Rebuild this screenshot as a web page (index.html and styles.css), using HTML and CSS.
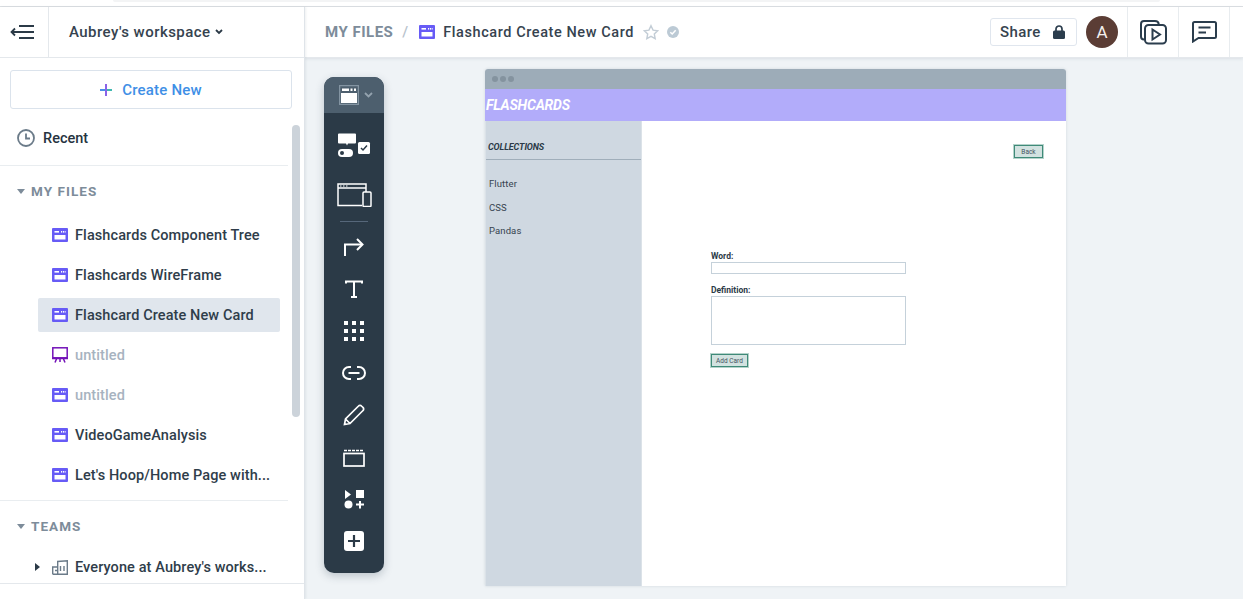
FILE: index.html
```html
<!DOCTYPE html>
<html lang="en">
<head>
  <meta charset="UTF-8" />
  <meta name="viewport" content="width=device-width, initial-scale=1" />
  <title>Flashcard Create New Card</title>
  <link rel="stylesheet" href="styles.css">
</head>
<body>
  <svg class="defs" width="0" height="0">
    <symbol id="board" viewBox="0 0 16 14">
      <rect width="16" height="14" rx="1" fill="#675bf6"/>
      <rect x="2.500" y="7" width="11" height="4.500" fill="#fff"/>
      <rect x="2.500" y="3" width="4.500" height="1.600" fill="#fff"/>
      <rect x="9" y="3" width="1.200" height="1.600" fill="#fff"/>
      <rect x="11" y="3" width="1.200" height="1.600" fill="#fff"/>
      <rect x="12.800" y="3" width=".8" height="1.600" fill="#fff"/>
    </symbol>
  </svg>

  <div class="top-strip"><div class="top-strip-bar"></div></div>

  <div class="app">
    <!-- left sidebar -->
    <aside class="sidebar">
      <div class="side-head">
        <div class="menu-cell">
          <svg width="24" height="16" viewBox="0 0 24 16" fill="none" stroke="#2b3a47" stroke-width="2">
            <path d="M9 2h15M1 8h23M9 14h15"/>
            <path d="M5 4.500 1.500 8 5 11.500" stroke-width="1.800"/>
          </svg>
        </div>
        <div class="workspace">Aubrey's workspace
          <svg width="8" height="6" viewBox="0 0 8 6" fill="none" stroke="#2b3a47" stroke-width="1.800"><path d="M1 1l3 3 3-3"/></svg>
        </div>
      </div>

      <div class="create-wrap">
        <button class="create-btn">
          <svg width="12" height="12" viewBox="0 0 12 12">
            <rect y="5" width="6" height="2" fill="#4b8fe8"/>
            <rect x="6" y="5" width="6" height="2" fill="#3fb8b0"/>
            <rect x="5" width="2" height="12" fill="#8a63e8"/>
          </svg>
          Create New
        </button>
      </div>

      <div class="recent">
        <svg width="18" height="18" viewBox="0 0 18 18" fill="none" stroke="#6b7b89" stroke-width="1.800">
          <circle cx="9" cy="9" r="8"/>
          <path d="M9 4.500V9.500h4"/>
        </svg>
        Recent
      </div>

      <div class="sec-title"><span class="caret-down"></span>MY FILES</div>
      <ul class="files">
        <li class="file"><svg class="file-icon"><use href="#board"/></svg>Flashcards Component Tree</li>
        <li class="file"><svg class="file-icon"><use href="#board"/></svg>Flashcards WireFrame</li>
        <li class="file selected"><svg class="file-icon"><use href="#board"/></svg>Flashcard Create New Card</li>
        <li class="file muted">
          <svg class="file-icon" viewBox="0 0 16 16" fill="none" stroke="#7312b8" stroke-width="1.500">
            <rect x=".8" y=".8" width="14.400" height="10"/>
            <path d="M0 11.500h16M4.500 12l-1.500 3.500M8 12v3M11.500 12l1.500 3.500"/>
          </svg>
          untitled
        </li>
        <li class="file muted"><svg class="file-icon"><use href="#board"/></svg>untitled</li>
        <li class="file"><svg class="file-icon"><use href="#board"/></svg>VideoGameAnalysis</li>
        <li class="file"><svg class="file-icon"><use href="#board"/></svg>Let's Hoop/Home Page with...</li>
      </ul>

      <div class="sec-title teams"><span class="caret-down"></span>TEAMS</div>
      <div class="team-row">
        <span class="caret-right"></span>
        <svg class="file-icon" viewBox="0 0 16 15" fill="none" stroke="#6b7b89" stroke-width="1.400">
          <path d="M.7 14.300V7h5M5.700 14.300V1.500L15.300 .8v13.500zM.7 14.300h14.600"/>
          <path d="M3 10.500h2M8.500 6v5M12 6v5"/>
        </svg>
        Everyone at Aubrey's works...
      </div>

      <div class="scrollbar"></div>
    </aside>

    <main class="content">
      <header class="topbar">
        <div class="crumbs">
          <span class="crumb-root">MY FILES</span>
          <span class="crumb-sep">/</span>
          <svg class="file-icon"><use href="#board"/></svg>
          <span class="crumb-title">Flashcard Create New Card</span>
          <svg class="star" width="16" height="16" viewBox="0 0 18 17" fill="none" stroke="#c3cdd6" stroke-width="1.600">
            <path d="M9 1.500l2.300 4.900 5.200.7-3.800 3.600 1 5.300L9 13.400 4.300 16l1-5.300L1.500 7.100l5.200-.7z"/>
          </svg>
          <svg width="12" height="12" viewBox="0 0 12 12">
            <circle cx="6" cy="6" r="6" fill="#bccad5"/>
            <path d="M3.300 6.200 5.200 8 8.700 4.200" fill="none" stroke="#fff" stroke-width="1.500"/>
          </svg>
        </div>
        <div class="top-actions">
          <button class="share-btn">Share
            <svg width="12" height="14" viewBox="0 0 12 14">
              <path d="M3 6V4a3 3 0 0 1 6 0v2" fill="none" stroke="#2b3d4d" stroke-width="1.700"/>
              <rect y="5.500" width="12" height="8.500" rx="1.500" fill="#2b3d4d"/>
            </svg>
          </button>
          <div class="avatar">A</div>
          <div class="action-cell first">
            <svg width="27" height="25" viewBox="0 0 27 25" fill="none" stroke="#2b3d4d" stroke-width="2">
              <path d="M4 19.500c-2 0-3-1-3-3V4c0-2 1-3 3-3h11c2 0 3.500 1 3.800 3"/>
              <rect x="5" y="5" width="21" height="18.500" rx="3.500" fill="#fff"/>
              <path d="M12.500 9.500v10l7.500-5z"/>
            </svg>
          </div>
          <div class="action-cell">
            <svg width="25" height="22" viewBox="0 0 25 22" fill="none" stroke="#2b3d4d" stroke-width="2">
              <path d="M2.500 1h20a1.500 1.500 0 0 1 1.500 1.500v13a1.500 1.500 0 0 1-1.500 1.500H6.500L1 20.500v-18A1.500 1.500 0 0 1 2.500 1z"/>
              <path d="M6.500 6.500h12M6.500 11.500h7.500"/>
            </svg>
          </div>
        </div>
      </header>

      <div class="canvas">
        <!-- floating tools -->
        <div class="toolbar">
          <div class="tool-head">
            <svg width="20" height="20" viewBox="0 0 20 20">
              <rect x=".5" y=".5" width="19" height="19" fill="none" stroke="#8394a2" stroke-width="1.500"/>
              <rect x="2" y="8" width="16" height="10" fill="#fff"/>
              <rect x="3" y="3.500" width="7" height="2.500" fill="#fff"/>
              <rect x="11.500" y="3.500" width="2" height="2.500" fill="#fff"/>
              <rect x="15" y="3.500" width="2" height="2.500" fill="#fff"/>
            </svg>
            <svg width="9" height="6" viewBox="0 0 9 6" fill="none" stroke="#93a2ae" stroke-width="1.800"><path d="M1 1l3.500 3.500L8 1"/></svg>
          </div>
          <div class="tool-list">
            <div class="tool-slot">
              <svg width="34" height="26" viewBox="0 0 34 26" fill="#fff">
                <path d="M1 1.500a1 1 0 0 1 1-1h16a1 1 0 0 1 1 1v8a1 1 0 0 1-1 1h-7l-1 2-1-2H2a1 1 0 0 1-1-1z"/>
                <rect x="21" y="9" width="12" height="12" rx="1.500"/>
                <path d="M24 15l2 2 4-4.500" fill="none" stroke="#2b3a47" stroke-width="1.500"/>
                <rect x="1" y="16" width="15" height="8" rx="4"/>
                <circle cx="5" cy="20" r="2" fill="#2b3a47"/>
              </svg>
            </div>
            <div class="tool-slot second">
              <svg width="35" height="24" viewBox="0 0 35 24" fill="none" stroke="#fff" stroke-width="1.500">
                <path d="M25 22.500H1V1h28v8"/>
                <path d="M1 5h28" />
                <path d="M3 3h1.500M6 3h1.500M9 3h1.500" stroke-width="1.200"/>
                <rect x="26" y="9" width="8" height="14.500" rx="1"/>
              </svg>
            </div>
            <div class="tool-sep"></div>
            <div class="tool-slot">
              <svg width="20" height="18" viewBox="0 0 20 18" fill="none" stroke="#fff" stroke-width="2">
                <path d="M1 18V6.500h17"/>
                <path d="M13 1l5.500 5.500L13 12"/>
              </svg>
            </div>
            <div class="tool-slot">
              <svg width="18" height="18" viewBox="0 0 18 18" fill="none" stroke="#fff" stroke-width="2">
                <path d="M1 3.500V1.500h16v2M9 1.500V17M6 17h6"/>
              </svg>
            </div>
            <div class="tool-slot">
              <svg width="20" height="20" viewBox="0 0 20 20" fill="#fff">
                <rect width="4" height="4"/><rect x="8" width="4" height="4"/><rect x="16" width="4" height="4"/>
                <rect y="8" width="4" height="4"/><rect x="8" y="8" width="4" height="4"/><rect x="16" y="8" width="4" height="4"/>
                <rect y="16" width="4" height="4"/><rect x="8" y="16" width="4" height="4"/><rect x="16" y="16" width="4" height="4"/>
              </svg>
            </div>
            <div class="tool-slot">
              <svg width="24" height="14" viewBox="0 0 24 14" fill="none" stroke="#fff" stroke-width="2">
                <path d="M9 1H7a6 6 0 0 0 0 12h2M15 1h2a6 6 0 0 1 0 12h-2M6.500 7h11"/>
              </svg>
            </div>
            <div class="tool-slot">
              <svg width="22" height="22" viewBox="0 0 22 22" fill="none" stroke="#fff" stroke-width="1.700">
                <path d="M1.500 20.500l1-5.500L15.500 2a2 2 0 0 1 3 0l1.500 1.500a2 2 0 0 1 0 3L7 19.500zM2.500 15l4.500 4.500"/>
              </svg>
            </div>
            <div class="tool-slot">
              <svg width="22" height="19" viewBox="0 0 22 19" fill="none" stroke="#fff" stroke-width="1.700">
                <rect x="1" y="5.500" width="20" height="12.500"/>
                <path d="M1 2.500h19" stroke-dasharray="3 1" stroke-width="1.500"/>
              </svg>
            </div>
            <div class="tool-slot">
              <svg width="20" height="20" viewBox="0 0 20 20" fill="#fff">
                <path d="M1 1l6 4.500L1 10z"/>
                <rect x="12" y="1" width="8" height="8"/>
                <circle cx="4.500" cy="15.500" r="4"/>
                <path d="M15 12h2v2.500h3v2h-3v3h-2v-3h-3v-2h3z"/>
              </svg>
            </div>
            <div class="tool-slot">
              <svg width="20" height="20" viewBox="0 0 20 20">
                <rect width="20" height="20" rx="3" fill="#fff"/>
                <path d="M10 4v12M4 10h12" stroke="#2b3a47" stroke-width="2.200"/>
              </svg>
            </div>
          </div>
        </div>

        <!-- the wireframe on the board -->
        <div class="artboard">
          <div class="art-bar"><i></i><i></i><i></i></div>
          <div class="art-head">FLASHCARDS</div>
          <div class="art-body">
            <div class="art-side">
              <div class="art-side-title">COLLECTIONS</div>
              <div class="art-link">Flutter</div>
              <div class="art-link">CSS</div>
              <div class="art-link">Pandas</div>
            </div>
            <div class="art-main">
              <div class="art-back"><span class="art-btn">Back</span></div>
              <div class="art-form">
                <div class="art-label">Word:</div>
                <div class="art-input"></div>
                <div class="art-label def">Definition:</div>
                <div class="art-area"></div>
                <span class="art-btn add">Add Card</span>
              </div>
            </div>
          </div>
        </div>
      </div>
    </main>
  </div>
</body>
</html>
```

FILE: styles.css
```css
* {
  box-sizing: border-box;
}
html, body {
  height: 100%;
}
body {
  margin: 0;
  overflow: hidden;
  background: #fff;
  color: #2b3a47;
  font-family: Roboto, "Noto Sans", sans-serif;
  font-size: 14.5px;
  font-weight: 500;
}
.defs {
  position: absolute;
}
ul {
  list-style: none;
  margin: 0;
  padding: 0;
}
button {
  font-family: inherit;
  cursor: pointer;
}

.top-strip {
  height: 7px;
  border-bottom: 1px solid #dcdfe3;
}
.top-strip-bar {
  width: 1047px;
  height: 2px;
  margin-left: 113px;
  background: #f3f4f5;
  border-radius: 0 0 6px 6px;
}
.app {
  display: flex;
  height: 592px;
}

/* sidebar */
.sidebar {
  position: relative;
  flex: 0 0 305px;
  border-right: 1px solid #dfe4e9;
  box-shadow: 1px 0 2px rgba(40, 60, 80, 0.08);
  z-index: 2;
  background: #fff;
}
.side-head {
  display: flex;
  height: 51px;
  border-bottom: 1px solid #e4e8ec;
}
.menu-cell {
  display: flex;
  align-items: center;
  justify-content: center;
  width: 49px;
  padding-right: 5px;
  border-right: 1px solid #e4e8ec;
}
.workspace {
  display: flex;
  align-items: center;
  gap: 4px;
  padding-left: 20px;
  font-size: 15px;
  letter-spacing: 0.45px;
  color: #36434f;
}
.create-wrap {
  padding: 12px 12px 0 10px;
}
.create-btn {
  display: flex;
  align-items: center;
  justify-content: center;
  gap: 10px;
  width: 100%;
  height: 39px;
  background: #fff;
  border: 1px solid #dbe3ec;
  border-radius: 3px;
  color: #3f8fe6;
  font-size: 15px;
  font-weight: 500;
  letter-spacing: 0.2px;
}
.recent {
  display: flex;
  align-items: center;
  gap: 8px;
  width: 288px;
  height: 57px;
  padding: 2px 0 0 17px;
  border-bottom: 1px solid #e9edf0;
  color: #26333f;
}
.sec-title {
  display: flex;
  align-items: center;
  gap: 6px;
  height: 52px;
  padding: 0 0 2px 17px;
  color: #7d8c9a;
  font-size: 13.5px;
  font-weight: 700;
  letter-spacing: 1.05px;
}
.caret-down {
  width: 0;
  height: 0;
  border-left: 4px solid transparent;
  border-right: 4px solid transparent;
  border-top: 5px solid #7d8c9a;
}
.file {
  display: flex;
  align-items: center;
  gap: 7px;
  width: 242px;
  height: 34px;
  margin: 0 0 6px 38px;
  padding-left: 14px;
  border-radius: 2px;
  color: #2f3d4a;
  letter-spacing: 0.1px;
  white-space: nowrap;
}
.file.selected {
  background: #e0e6ed;
}
.file.muted {
  color: #a7b3c0;
}
.file-icon {
  flex: none;
  width: 16px;
  height: 14px;
}
.muted .file-icon {
  height: 16px;
}
.teams {
  width: 288px;
  height: 51px;
  margin-top: 8px;
  padding-bottom: 0;
  border-top: 1px solid #e9edf0;
}
.team-row {
  display: flex;
  align-items: center;
  gap: 7px;
  height: 33px;
  padding-left: 52px;
  border-bottom: 1px solid #e4e8ec;
  color: #2f3d4a;
  letter-spacing: 0.1px;
  white-space: nowrap;
}
.team-row .file-icon {
  height: 15px;
}
.caret-right {
  width: 0;
  height: 0;
  margin-left: -17px;
  margin-right: 5px;
  border-top: 4px solid transparent;
  border-bottom: 4px solid transparent;
  border-left: 5px solid #2b3a47;
}
.scrollbar {
  position: absolute;
  top: 118px;
  left: 292px;
  width: 8px;
  height: 292px;
  border-radius: 4px;
  background: #ccd3da;
}

/* main area */
.content {
  flex: 1;
  display: flex;
  flex-direction: column;
  min-width: 0;
}
.topbar {
  display: flex;
  align-items: center;
  justify-content: space-between;
  flex: 0 0 51px;
  padding-left: 20px;
  border-bottom: 1px solid #e4e8ec;
  box-shadow: 0 1px 3px rgba(40, 60, 80, 0.1);
  z-index: 1;
  background: #fff;
}
.crumbs {
  display: flex;
  align-items: center;
}
.crumb-root {
  color: #7d8c9a;
  font-size: 15px;
  font-weight: 700;
  letter-spacing: 0.5px;
}
.crumb-sep {
  margin: 0 11px 0 9px;
  color: #b8c3cd;
  font-size: 15px;
}
.crumb-title {
  margin: 0 9px 0 8px;
  color: #36434f;
  letter-spacing: 0.58px;
  white-space: nowrap;
}
.star {
  margin-right: 8px;
}
.top-actions {
  display: flex;
  align-items: center;
  height: 100%;
}
.share-btn {
  display: flex;
  align-items: center;
  gap: 12px;
  width: 87px;
  height: 28px;
  padding-left: 9px;
  margin-right: 9px;
  background: #fff;
  border: 1px solid #e0e6ee;
  border-radius: 3px;
  color: #36434f;
  font-size: 15px;
  font-weight: 500;
  letter-spacing: 0.4px;
}
.avatar {
  display: flex;
  align-items: center;
  justify-content: center;
  width: 32px;
  height: 32px;
  margin-right: 9px;
  border-radius: 50%;
  background: #5b3d35;
  color: #f4efed;
  font-size: 17px;
  font-weight: 400;
}
.action-cell {
  display: flex;
  align-items: center;
  justify-content: center;
  width: 51px;
  height: 100%;
  border-left: 1px solid #e8ecef;
}
.action-cell:last-child {
  width: 52px;
  border-right: 1px solid #e8ecef;
  margin-right: 13px;
}

/* canvas */
.canvas {
  flex: 1;
  display: flex;
  align-items: flex-start;
  gap: 101px;
  padding: 11px 0 0 19px;
  background: #eff3f6;
}
.toolbar {
  flex: 0 0 60px;
  height: 496px;
  margin-top: 8px;
  border-radius: 10px;
  overflow: hidden;
  background: #2b3a47;
  box-shadow: 0 3px 8px rgba(40, 60, 80, 0.25);
}
.tool-head {
  display: flex;
  align-items: center;
  justify-content: center;
  gap: 5px;
  height: 36px;
  padding-left: 3px;
  background: #4d5f6e;
}
.tool-list {
  display: flex;
  flex-direction: column;
  align-items: center;
  padding-top: 12px;
}
.tool-slot {
  display: flex;
  align-items: center;
  justify-content: center;
  flex: 0 0 42px;
}
.tool-slot.second {
  margin-top: 7px;
}
.tool-sep {
  flex: none;
  width: 28px;
  height: 1px;
  margin: 5px 0 4px;
  background: #56677a;
}

/* wireframe */
.artboard {
  flex: 0 0 581px;
  height: 517px;
  display: flex;
  flex-direction: column;
  background: #fff;
  border-radius: 3px 3px 0 0;
  box-shadow: 0 0 3px rgba(40, 60, 80, 0.15);
  overflow: hidden;
  font-weight: 400;
  color: #36434f;
}
.art-bar {
  display: flex;
  align-items: center;
  gap: 2px;
  flex: 0 0 20px;
  padding-left: 7px;
  background: #9dacb8;
}
.art-bar i {
  width: 6px;
  height: 6px;
  border-radius: 50%;
  background: #84939f;
}
.art-head {
  flex: 0 0 32px;
  padding: 1px 0 0 1px;
  line-height: 31px;
  background: #b2acfa;
  color: #fff;
  font-size: 14px;
  font-weight: 700;
  font-style: italic;
  letter-spacing: -0.2px;
}
.art-body {
  flex: 1;
  display: flex;
}
.art-side {
  flex: 0 0 157px;
  background: #cfd8e1;
  border-left: 1px solid #dbe2e8;
  border-right: 1px solid #dbe2e8;
  font-size: 9px;
}
.art-side-title {
  height: 39px;
  padding: 21px 0 0 2px;
  border-bottom: 1px solid #a0aeba;
  color: #2b3a47;
  font-weight: 700;
  font-style: italic;
  letter-spacing: -0.1px;
}
.art-link {
  height: 23.500px;
  padding: 8px 0 0 3px;
  font-size: 9.5px;
  letter-spacing: 0.1px;
}
.art-side-title + .art-link {
  margin-top: 10px;
}
.art-main {
  flex: 1;
  min-width: 0;
}
.art-back {
  display: flex;
  justify-content: flex-end;
  padding: 24px 23px 0 0;
}
.art-btn {
  display: inline-flex;
  align-items: center;
  justify-content: center;
  height: 13px;
  border: 1px solid #3f8a78;
  outline: 1px solid #b5d3cb;
  background: #d2e2e0;
  color: #44525e;
  font-size: 6.500px;
}
.art-back .art-btn {
  width: 29px;
}
.art-form {
  width: 195px;
  margin: 92px 0 0 69px;
}
.art-label {
  height: 15px;
  font-size: 8.500px;
  font-weight: 700;
  color: #2b3a47;
  line-height: 12px;
}
.art-label.def {
  height: 12px;
  margin-top: 10px;
}
.art-input {
  height: 12px;
  margin-top: -3px;
  background: #fff;
  border: 1px solid #c5d1da;
}
.art-area {
  height: 49px;
  background: #fff;
  border: 1px solid #c5d1da;
}
.art-btn.add {
  width: 37px;
  margin-top: 9px;
}
```
